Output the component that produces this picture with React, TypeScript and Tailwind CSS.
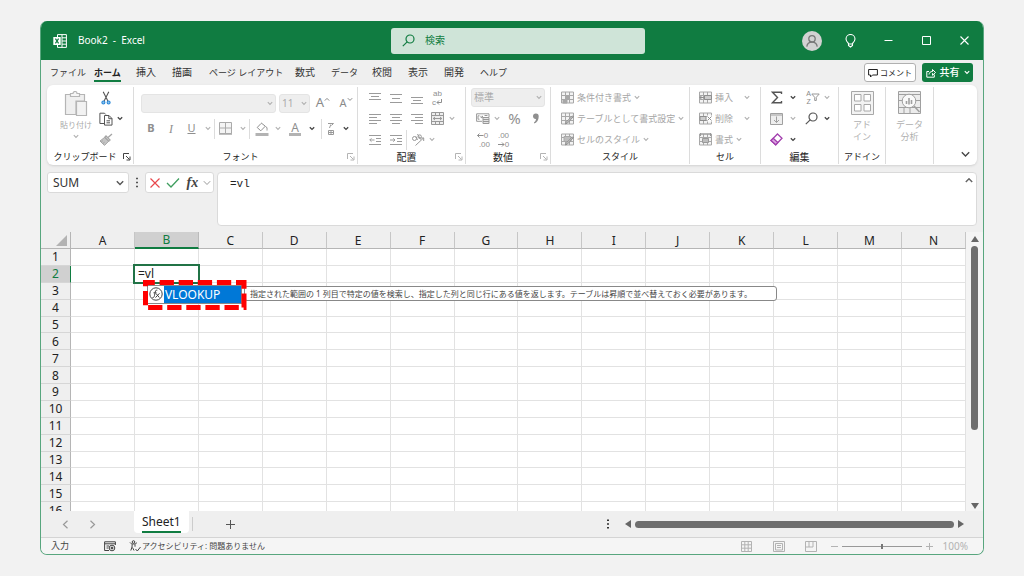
import { useState } from "react";
import type { ReactNode } from "react";

const COLUMNS = ["A", "B", "C", "D", "E", "F", "G", "H", "I", "J", "K", "L", "M", "N"];
const ROWS = Array.from({ length: 16 }, (_, i) => i + 1);

const TABS: { label: string; kana?: boolean }[] = [
  { label: "ファイル", kana: true },
  { label: "ホーム", kana: true },
  { label: "挿入" },
  { label: "描画" },
  { label: "ページ レイアウト", kana: true },
  { label: "数式" },
  { label: "データ", kana: true },
  { label: "校閲" },
  { label: "表示" },
  { label: "開発" },
  { label: "ヘルプ", kana: true },
];

// ── Icons ─────────────────────────────────────────────────────────────────────

function Svg({ w = 14, h = 14, sw = 1, className = "", children }: {
  w?: number;
  h?: number;
  sw?: number;
  className?: string;
  children: ReactNode;
}) {
  return (
    <svg
      width={w}
      height={h}
      viewBox={`0 0 ${w} ${h}`}
      fill="none"
      stroke="currentColor"
      strokeWidth={sw}
      className={`shrink-0 ${className}`}
      aria-hidden="true"
    >
      {children}
    </svg>
  );
}

function Chevron({ dark = false }: { dark?: boolean }) {
  return (
    <Svg w={6} h={5} sw={dark ? 1.3 : 1.1} className={dark ? "text-[#444]" : "text-[#b0b0b0]"}>
      <path d="M.8 1.2 3 3.4 5.2 1.2" />
    </Svg>
  );
}

function Launcher({ dark = false }: { dark?: boolean }) {
  return (
    <Svg w={8} h={8} className={dark ? "text-[#444]" : "text-[#b4b4b4]"}>
      <path d="M.5 6V.5H6M3 3l3.5 3.5M7 3.5V7H3.5" />
    </Svg>
  );
}

function ExcelIcon() {
  return (
    <Svg w={14} h={14} className="text-white">
      <path d="M4.5 3V.6h8.900v12.800H4.500V11M9 .6v12.800M9 3.800h4.400M9 7h4.400M9 10.200h4.400" />
      <path d="M.3 3h7.400v8H.3z" fill="currentColor" stroke="none" />
      <path d="m2.400 4.700 3.200 4.600M5.600 4.700 2.400 9.300" stroke="#107c41" strokeWidth="1.200" />
    </Svg>
  );
}

function PasteIcon() {
  return (
    <Svg w={24} h={26} className="text-[#b5b5b5]" sw={1.2}>
      <path d="M1.500 3.500h19V10H12v13.500H1.500z" fill="#efefef" />
      <path d="M6.500 5.500v-3H9a2 2 0 0 1 4 0h2.500v3z" fill="#f5f5f5" />
      <path d="M12.500 10.500h10v14h-10z" fill="#f2f2f2" />
    </Svg>
  );
}

function ScissorsIcon() {
  return (
    <Svg w={12} h={14} className="text-[#555]" sw={1.1}>
      <path d="m3.200.8 4.800 9.400M8.800.8 4 10.200" />
      <circle cx="3.400" cy="11.500" r="1.500" stroke="#2b88d8" fill="#8ec5ee" />
      <circle cx="8.600" cy="11.500" r="1.500" stroke="#2b88d8" fill="#8ec5ee" />
    </Svg>
  );
}

function CopyIcon() {
  return (
    <Svg w={14} h={14} className="text-[#555]">
      <path d="M5 11.500H.9V1.200h4.600l1.300 1.300" />
      <path d="M5.500 3.500H10l3 3v6.600H5.500zM9.800 3.600v3.100H13M7.500 8.800H11M7.500 10.800H11" />
    </Svg>
  );
}

function BrushIcon() {
  return (
    <Svg w={14} h={13} className="text-[#a5a5a5]">
      <path d="M5.500 4.500 1 8l4.500 4.400 4.200-4.200z" fill="#c4c4c4" />
      <path d="m13 1-4 3.600M7 3l4 4-1.200 1.200-4-4z" fill="#eee" strokeWidth="1.300" />
      <path d="m2.400 8.600 1.400-.8M4 10.400l1.600-1.200" />
    </Svg>
  );
}

function TableIcon({ kind = "grid" }: { kind?: string }) {
  return (
    <Svg w={13} h={13} className="text-[#a8a8a8]">
      <path d="M.5 1h12v11H.5zM.5 4.500h12M.5 8.500h12M4.500 1v11M8.500 1v11" fill="#f3f3f3" />
      {kind === "cond" && <path d="M4.500 1v7.500h3.500v-4H4.500M2 8.500h4V12H2z" fill="#a8a8a8" />}
      {kind === "brush" && <path d="m12.500 4.500-6 6.500-2 1 .8-2 6-6z" fill="#c8c8c8" stroke="#8f8f8f" />}
      {kind === "style" && (
        <>
          <path d="M3 3.500h7v5H3z" fill="#bdbdbd" />
          <path d="m12.500 4.500-6 6.500-2 1 .8-2 6-6z" fill="#c8c8c8" stroke="#8f8f8f" />
        </>
      )}
      {kind === "insert" && <path d="M5.500 4.500h7v4h-7zM4.800 6.500H.8M2.500 4.800.8 6.500l1.700 1.700" fill="#ccc" stroke="#8f8f8f" />}
      {kind === "delete" && (
        <>
          <path d="M8 3.500h5v6H8z" fill="#fff" stroke="none" />
          <path d="M1 4.500h6v4H1zM8.500 4.500l4 4M12.500 4.500l-4 4" fill="#ccc" stroke="#8f8f8f" />
        </>
      )}
      {kind === "format" && <path d="M3.500 5.500h6v4h-6zM1.500 0v3M11.500 0v3M2 1h9" fill="#bdbdbd" stroke="#999" />}
    </Svg>
  );
}

function Lines({ rows }: { rows: [number, number, number][] }) {
  return (
    <Svg w={12} h={12} className="text-[#9b9b9b]">
      {rows.map(([x, y, width]) => (
        <path key={y} d={`M${x} ${y}h${width}`} />
      ))}
    </Svg>
  );
}

function PersonIcon() {
  return (
    <Svg w={20} h={20} className="text-[#777]" sw={1.3}>
      <circle cx="10" cy="10" r="10" fill="#d2d2d2" stroke="none" />
      <circle cx="10" cy="7.800" r="3.200" />
      <path d="M4.800 15.600c.4-3 2.400-4.400 5.200-4.400s4.800 1.400 5.200 4.400" />
    </Svg>
  );
}

function SearchIcon({ className = "" }: { className?: string }) {
  return (
    <Svg w={13} h={13} sw={1.2} className={className}>
      <circle cx="8" cy="5" r="4" />
      <path d="M5.200 7.800.8 12.200" />
    </Svg>
  );
}

function Triangle({ d }: { d: string }) {
  return (
    <Svg w={8} h={8} className="text-[#666]">
      <path d={d} fill="currentColor" stroke="none" />
    </Svg>
  );
}

// ── Ribbon parts ──────────────────────────────────────────────────────────────

function Group({ label, kana, launcher, dark, children }: {
  label?: string;
  kana?: boolean;
  launcher?: boolean;
  dark?: boolean;
  children: ReactNode;
}) {
  return (
    <section aria-label={label} className="flex min-w-0 flex-col border-r border-[#dcdcdc]">
      <div className="h-[63px]">{children}</div>
      <div className="flex h-[14px] items-center text-[#222]">
        <span className={`flex-1 whitespace-nowrap text-center ${kana ? "text-[9px]" : "text-[10px]"}`}>{label}</span>
        {launcher && (
          <button type="button" aria-label={`${label}の設定`} className="mr-[2px]">
            <Launcher dark={dark} />
          </button>
        )}
      </div>
    </section>
  );
}

function Tool({ name, className = "w-[21px]", children }: {
  name: string;
  className?: string;
  children: ReactNode;
}) {
  return (
    <button
      type="button"
      aria-label={name}
      className={`flex h-[21px] shrink-0 items-center justify-center ${className}`}
    >
      {children}
    </button>
  );
}

function Combo({ name, value, className }: { name: string; value: string; className: string }) {
  return (
    <div className={`relative h-[19px] ${className}`}>
      <select
        aria-label={name}
        defaultValue={value}
        className="block h-full w-full appearance-none rounded-[3px] border border-[#e4e4e4] bg-[#eee] py-0 pl-[2px] text-[10px] leading-[17px] text-[#aaa]"
      >
        <option>{value}</option>
      </select>
      <span className="pointer-events-none absolute inset-y-0 right-[3px] flex items-center">
        <Chevron />
      </span>
    </div>
  );
}

function MenuRow({ kind, label, spread = false }: { kind: string; label: string; spread?: boolean }) {
  return (
    <button type="button" className="flex h-[21px] items-center gap-[3px] whitespace-nowrap text-[9px] text-[#a6a6a6]">
      <TableIcon kind={kind} />
      <span>{label}</span>
      <span className={spread ? "ml-2" : ""}>
        <Chevron />
      </span>
    </button>
  );
}

function Rule() {
  return <span className="h-5 w-px shrink-0 bg-[#dcdcdc]" />;
}

function Ribbon() {
  return (
    <div className="mx-[6px] grid h-[80px] shrink-0 grid-cols-[87fr_224fr_108fr_85fr_139fr_71fr_78fr_47fr_48fr_43fr] rounded-[6px] bg-white pt-[2px] pb-px shadow-sm">
      <Group label="クリップボード" kana launcher dark>
        <div className="flex pl-[10px]">
          <button type="button" className="flex w-[38px] flex-col items-center pt-[4px] text-[8px] leading-3 whitespace-nowrap text-[#aaa]">
            <PasteIcon />
            <span className="mt-[2px]">貼り付け</span>
            <span className="mt-[3px]"><Chevron /></span>
          </button>
          <div className="flex flex-col">
            <Tool name="切り取り"><ScissorsIcon /></Tool>
            <div className="flex">
              <Tool name="コピー"><CopyIcon /></Tool>
              <Tool name="コピーのオプション" className="w-2"><Chevron dark /></Tool>
            </div>
            <Tool name="書式のコピー"><BrushIcon /></Tool>
          </div>
        </div>
      </Group>

      <Group label="フォント" kana launcher>
        <div className="flex flex-col gap-[5px] pt-[6px] pl-[7px]">
          <div className="flex h-5 items-center gap-[3px]">
            <Combo name="フォント名" value="" className="w-[135px]" />
            <Combo name="フォント サイズ" value="11" className="w-[31px]" />
            <Tool name="フォント サイズの拡大" className="w-5 text-[13px] text-[#8a8a8a]">
              A
              <Svg w={6} h={5} className="mb-2"><path d="M.8 3.600 3 1.400l2.200 2.200" /></Svg>
            </Tool>
            <Tool name="フォント サイズの縮小" className="w-5 text-[11px] text-[#8a8a8a]">
              A
              <Svg w={6} h={5} className="mb-2"><path d="M.8 1.200 3 3.400l2.200-2.200" /></Svg>
            </Tool>
          </div>
          <div className="flex h-[21px] items-center text-[11px] text-[#8f8f8f]">
            <Tool name="太字" className="w-5"><b>B</b></Tool>
            <Tool name="斜体" className="w-5"><i className="font-['Liberation_Serif',serif] text-[12px]">I</i></Tool>
            <Tool name="下線" className="w-[21px]"><u>U</u></Tool>
            <Tool name="下線の種類" className="w-3"><Chevron /></Tool>
            <Rule />
            <Tool name="罫線">
              <Svg w={13} h={13} className="text-[#aaa]">
                <path d="M.5.5h12v11H.5zM6.500.5v11M.5 6h12" fill="#f4f4f4" />
                <path d="M0 12h13" strokeWidth="1.500" />
              </Svg>
            </Tool>
            <Tool name="罫線の種類" className="w-[13px]"><Chevron /></Tool>
            <Rule />
            <Tool name="塗りつぶし" className="w-[23px]">
              <Svg w={14} h={14} className="text-[#8f8f8f]">
                <path d="m6 1.500-3.800 4 3.600 3.300 4.500-4.600L6 .8M10.500 4.500c2 .5 1.500 2.500 1.500 4" />
                <path d="M.5 12.500h13" stroke="#b3b3b3" strokeWidth="3" />
              </Svg>
            </Tool>
            <Tool name="塗りつぶしの色" className="w-[9px]"><Chevron /></Tool>
            <Tool name="フォントの色" className="w-[26px] text-[12px]">
              <span className="border-b-[3px] border-[#b3b3b3] px-[2px] leading-[11px]">A</span>
            </Tool>
            <Tool name="フォントの色の選択" className="w-[8px]"><Chevron dark /></Tool>
            <span className="w-[5px]" />
            <Rule />
            <Tool name="ふりがな" className="w-[18px]">
              <Svg w={8} h={14} className="text-[#999]">
                <path d="M1 1.500h5.500L4.500 3.500M3.800 2.500 2.500 6M1.500 8.500h5v4h-5zM1.500 10.500h5M4 8.500v4" />
              </Svg>
            </Tool>
            <Tool name="ふりがなの設定" className="w-3"><Chevron dark /></Tool>
          </div>
        </div>
      </Group>

      <Group label="配置" launcher>
        <div className="flex flex-col pl-[6px]">
          <div className="flex">
            <Tool name="上揃え"><Lines rows={[[0, 1.5, 12], [2, 4.5, 8], [0, 7.5, 12]]} /></Tool>
            <Tool name="上下中央揃え"><Lines rows={[[0, 2.5, 12], [2, 6.5, 8], [0, 10.5, 12]]} /></Tool>
            <Tool name="下揃え"><Lines rows={[[0, 5.5, 12], [2, 8.5, 8], [0, 11.5, 12]]} /></Tool>
            <Tool name="折り返して全体を表示" className="w-[21px] flex-col font-['Liberation_Sans',sans-serif] text-[8px] text-[#8f8f8f]">
              <span className="leading-[9px]">ab</span>
              <span className="flex items-center leading-[9px]">
                c
                <Svg w={7} h={7}><path d="M5.500 0v3.500H1M3 1.500l-2 2 2 2" /></Svg>
              </span>
            </Tool>
          </div>
          <div className="flex">
            <Tool name="左揃え"><Lines rows={[[0, 1.5, 12], [0, 4.5, 8], [0, 7.5, 12], [0, 10.5, 8]]} /></Tool>
            <Tool name="中央揃え"><Lines rows={[[0, 1.5, 12], [2, 4.5, 8], [0, 7.5, 12], [2, 10.5, 8]]} /></Tool>
            <Tool name="右揃え"><Lines rows={[[0, 1.5, 12], [4, 4.5, 8], [0, 7.5, 12], [4, 10.5, 8]]} /></Tool>
            <Tool name="セルを結合して中央揃え">
              <Svg w={13} h={13} className="text-[#999]">
                <path d="M.5.5h12v12H.5zM.5 3.500h12M.5 9.500h12M4.500.5v3M8.500.5v3M4.500 9.500v3M8.500 9.500v3" fill="#eee" />
                <path d="M2 6.500h9M4 5 2.200 6.500 4 8M9 5l1.800 1.500L9 8" />
              </Svg>
            </Tool>
            <Tool name="結合の種類" className="w-2"><Chevron /></Tool>
          </div>
          <div className="flex items-center">
            <Tool name="インデントを減らす">
              <Svg w={12} h={12} className="text-[#9b9b9b]">
                <path d="M0 1.500h12M7 4.500h5M7 7.500h5M0 10.500h12M5.500 6H.8M2.500 4.300.8 6l1.700 1.700" />
              </Svg>
            </Tool>
            <Tool name="インデントを増やす">
              <Svg w={12} h={12} className="text-[#9b9b9b]">
                <path d="M0 1.500h12M7 4.500h5M7 7.500h5M0 10.500h12M0 6h5M3.300 4.300 5 6 3.300 7.700" />
              </Svg>
            </Tool>
            <Rule />
            <Tool name="方向">
              <Svg w={14} h={14} className="text-[#999]">
                <circle cx="3.500" cy="5.500" r="2" />
                <path d="m5 3.500 1.500 3.500M6.500 1l3 5.500" />
                <circle cx="8.700" cy="3.600" r="1.700" />
                <path d="m4.500 12.500 8-7.500M9.500 5h3.200v3" />
              </Svg>
            </Tool>
            <Tool name="方向の種類" className="w-2"><Chevron /></Tool>
          </div>
        </div>
      </Group>

      <Group label="数値" launcher>
        <div className="flex flex-col">
          <div className="flex h-[21px] items-center px-[5px]">
            <Combo name="表示形式" value="標準" className="flex-1" />
          </div>
          <div className="flex items-center pl-[6px] text-[#8f8f8f]">
            <Tool name="通貨表示形式">
              <Svg w={14} h={11} className="text-[#999]">
                <path d="M13 4V.8H.6v7.500H6M3.500 2.800H2v3.400h1.500M5 2.800v1.800h1.500V2.800M8.500 2.500h3" />
                <path d="M7 4.500h6v6H7zM7 6.500h6M7 8.500h6" fill="#e5e5e5" />
              </Svg>
            </Tool>
            <Tool name="通貨の選択" className="w-2"><Chevron /></Tool>
            <Tool name="パーセント スタイル" className="ml-[3px] w-[21px] text-[15px]">%</Tool>
            <Tool name="桁区切りスタイル">
              <Svg w={8} h={12}>
                <path d="M1 3.300a2.800 2.800 0 0 1 5.700.2c0 3.500-1.800 6-4.200 7l-.6-.9c1.300-.8 2-2 2.100-3.500C2.300 6.300 1 5 1 3.300z" fill="currentColor" stroke="none" />
              </Svg>
            </Tool>
          </div>
          <div className="flex pl-[6px] font-['Liberation_Sans',sans-serif] text-[8px] text-[#8f8f8f]">
            <Tool name="小数点以下の表示桁数を増やす" className="w-[21px] flex-col">
              <span className="flex items-center leading-[9px]">
                <Svg w={7} h={5}><path d="M6.500 2.500h-6M2.500.5l-2 2 2 2" /></Svg>0
              </span>
              <span className="self-end pr-[3px] leading-[9px]">.00</span>
            </Tool>
            <Tool name="小数点以下の表示桁数を減らす" className="w-[21px] flex-col">
              <span className="leading-[9px]">.00</span>
              <span className="flex items-center leading-[9px]">
                <Svg w={7} h={5}><path d="M0 2.500h6M4 .5l2 2-2 2" /></Svg>0
              </span>
            </Tool>
          </div>
        </div>
      </Group>

      <Group label="スタイル" kana>
        <div className="flex flex-col pl-[10px]">
          <MenuRow kind="cond" label="条件付き書式" />
          <MenuRow kind="brush" label="テーブルとして書式設定" />
          <MenuRow kind="style" label="セルのスタイル" />
        </div>
      </Group>

      <Group label="セル" kana>
        <div className="flex flex-col pl-[9px]">
          <MenuRow kind="insert" label="挿入" spread />
          <MenuRow kind="delete" label="削除" spread />
          <MenuRow kind="format" label="書式" />
        </div>
      </Group>

      <Group label="編集">
        <div className="grid grid-cols-[21px_12px_24px_8px] pl-[5px]">
          <Tool name="合計">
            <Svg w={12} h={13} sw={1.4} className="text-[#555]">
              <path d="M10.500 3V1.200H1.500L6.500 6.500l-5 5.200h9V10" />
            </Svg>
          </Tool>
          <Tool name="合計の種類" className="w-3"><Chevron dark /></Tool>
          <Tool name="並べ替えとフィルター" className="w-6 justify-end pr-[3px]">
            <span className="flex flex-col font-['Liberation_Sans',sans-serif] text-[7px] leading-[8px] text-[#888]">
              <span>A</span>
              <span>Z</span>
            </span>
            <Svg w={9} h={9} className="text-[#999]">
              <path d="M.8 1h7.400L5.300 4.300V7.500H3.700V4.300z" />
            </Svg>
          </Tool>
          <Tool name="並べ替えの種類" className="w-2"><Chevron /></Tool>

          <Tool name="フィル">
            <Svg w={13} h={12} className="text-[#a0a0a0]">
              <path d="M.5.5h12v11H.5zM.5 2h12" fill="#eee" />
              <path d="M6.500 3.500v6M4 7l2.500 2.500L9 7" />
            </Svg>
          </Tool>
          <Tool name="フィルの種類" className="w-3"><Chevron /></Tool>
          <Tool name="検索と選択" className="w-6"><SearchIcon className="text-[#555]" /></Tool>
          <Tool name="検索の種類" className="w-2"><Chevron dark /></Tool>

          <Tool name="クリア">
            <Svg w={13} h={13} sw={1.3} className="text-[#a33fae]">
              <path d="M7.500 1 12 5.200 5.700 11.800 1 7.500z" fill="#fff" />
              <path d="m3.200 5.300 4.600 4.300-2.100 2.200L1 7.500z" fill="#dba4e2" />
            </Svg>
          </Tool>
          <Tool name="クリアの種類" className="w-3"><Chevron dark /></Tool>
        </div>
      </Group>

      <Group label="アドイン" kana>
        <button type="button" className="flex w-full flex-col items-center pt-[4px] text-[9px] leading-3 text-[#b0b0b0]">
          <Svg w={23} h={24} className="mb-[4px] text-[#a8a8a8]">
            <path d="M.5.5h22v23H.5z" fill="#f3f3f3" />
            <path d="M3.500 3.500H10V10H3.500zM13 3.500h6.500V10H13zM3.500 13.500H10V20H3.500zM13 13.500h6.500V20H13z" fill="#fff" />
          </Svg>
          <span>アド</span>
          <span>イン</span>
        </button>
      </Group>

      <Group>
        <button type="button" className="flex w-full flex-col items-center pt-[4px] text-[9px] leading-3 text-[#b0b0b0]">
          <Svg w={23} h={24} className="mb-[4px] text-[#a0a0a0]">
            <path d="M.5.5h22v22H.5zM.5 3.500h22M.5 9.500h22M.5 16.500h22M6 16.500v6M12 16.500v6" fill="#ececec" />
            <circle cx="11" cy="10" r="6.800" fill="#fafafa" />
            <path d="M8.500 13v-3M11 13.500V7M13.500 13V9" strokeWidth="1.600" />
            <path d="m16 15 5.500 6" strokeWidth="1.600" />
          </Svg>
          <span>データ</span>
          <span>分析</span>
        </button>
      </Group>

      <div className="flex items-end justify-end pr-[7px] pb-[6px]">
        <button type="button" aria-label="リボンを折りたたむ">
          <Svg w={9} h={8} sw={1.3} className="text-[#444]"><path d="M.8 2.200 4.500 6l3.700-3.800" /></Svg>
        </button>
      </div>
    </div>
  );
}

// ── Title bar and tabs ────────────────────────────────────────────────────────

function TitleBar() {
  return (
    <header className="grid h-[39px] shrink-0 grid-cols-[350fr_254fr_338fr] items-center bg-[#107c41] text-white">
      <div className="flex items-center gap-[11px] pl-[12px] text-[10px]">
        <ExcelIcon />
        <h1 className="whitespace-pre">Book2  -  Excel</h1>
      </div>
      <label className="flex h-[26px] items-center gap-[10px] rounded-[3px] bg-[#cfe4d8] pl-[11px] text-[#107c41]">
        <SearchIcon />
        <input
          type="search"
          aria-label="検索"
          placeholder="検索"
          className="min-w-0 flex-1 bg-transparent text-[10px] outline-none placeholder:text-[#107c41]"
        />
      </label>
      <div className="flex items-center justify-end">
        <Tool name="アカウント" className="w-[38px]"><PersonIcon /></Tool>
        <Tool name="ヒント" className="w-[38px]">
          <Svg w={11} h={14} sw={1.1}>
            <path d="M3.500 9.500C2 8 1 6.800 1 5a4.500 4.500 0 0 1 9 0c0 1.800-1 3-2.500 4.500v2L5.500 13l-2-1.500zM3.500 10h4" />
          </Svg>
        </Tool>
        <Tool name="最小化" className="w-[38px]"><Svg w={9} h={9}><path d="M.5 4.500h8" /></Svg></Tool>
        <Tool name="最大化" className="w-[38px]"><Svg w={9} h={9}><path d="M.5.5h8v8h-8z" /></Svg></Tool>
        <Tool name="閉じる" className="w-[38px]"><Svg w={9} h={9} sw={1.1}><path d="m.5.5 8 8M8.500.5l-8 8" /></Svg></Tool>
      </div>
    </header>
  );
}

function TabBar() {
  const [active, setActive] = useState("ホーム");
  return (
    <div className="flex h-[25px] shrink-0 items-center pr-[10px] pl-[9px]">
      <nav className="grid flex-1 grid-cols-[44px_42px_36px_37px_86px_36px_41px_36px_36px_36px_auto] text-[#333]">
        {TABS.map(({ label, kana }) => (
          <button
            key={label}
            type="button"
            onClick={() => setActive(label)}
            className={[
              "h-[19px] justify-self-start whitespace-nowrap border-b-2 pt-[2px]",
              kana ? "text-[9px]" : "text-[10px]",
              active === label ? "border-[#107c41] font-bold text-[#222]" : "border-transparent",
            ].join(" ")}
          >
            {label}
          </button>
        ))}
      </nav>
      <div className="flex gap-[6px] whitespace-nowrap text-[9px]">
        <button type="button" className="flex h-[19px] w-[52px] items-center justify-center gap-[2px] rounded-[3px] border border-[#b0b0b0] bg-white text-[8px] text-[#222]">
          <Svg w={10} h={10}><path d="M.6 1.500h8.800v5.500H4.500L2.500 9V7H.6z" /></Svg>
          コメント
        </button>
        <button type="button" className="flex h-[19px] w-[51px] items-center justify-center gap-[4px] rounded-[3px] bg-[#107c41] text-[10px] font-medium text-white">
          <Svg w={10} h={10}>
            <path d="M3 3.500H.8v5.700h7.500V6.500M3 6.500c.2-2 1.500-3 3.500-3V1.500l3 3-3 2.800V5.200" />
          </Svg>
          共有
          <Svg w={6} h={5} sw={1.2}><path d="M.8 1.200 3 3.400 5.200 1.200" /></Svg>
        </button>
      </div>
    </div>
  );
}

// ── Formula bar ───────────────────────────────────────────────────────────────

function FormulaBar({ formula, onChange }: { formula: string; onChange: (v: string) => void }) {
  return (
    <div className="mx-[6px] mt-[7px] flex h-[54px] shrink-0 items-start">
      <div className="flex h-[21px] w-[82px] items-center rounded-[3px] border border-[#dadada] bg-white pr-[4px] pl-[5px]">
        <input aria-label="名前ボックス" defaultValue="SUM" className="min-w-0 flex-1 text-[12px] text-[#333] outline-none" />
        <button type="button" aria-label="名前の一覧">
          <Svg w={8} h={6} sw={1.4} className="text-[#555]"><path d="m.8 1.200 3.200 3.300 3.200-3.300" /></Svg>
        </button>
      </div>
      <Svg w={16} h={21} className="text-[#555]">
        <path d="M7 6.500h2M7 10.500h2M7 14.500h2" strokeWidth="1.500" />
      </Svg>
      <div className="flex h-[21px] w-[69px] items-center justify-between rounded-[3px] border border-[#dadada] bg-white pr-[2px] pl-[3px]">
        <button type="button" aria-label="キャンセル" className="text-[#e8474c]">
          <Svg w={12} h={12} sw={1.2}><path d="m1.500 1.500 9 9M10.500 1.500l-9 9" /></Svg>
        </button>
        <button type="button" aria-label="入力" className="text-[#3f9e5f]">
          <Svg w={14} h={12} sw={1.3}><path d="m1 6 4 4L13 1.500" /></Svg>
        </button>
        <button type="button" aria-label="関数の挿入" className="pl-[2px] font-['Liberation_Serif',serif] text-[14px] leading-4 font-bold text-[#444] italic">
          fx
        </button>
        <button type="button" aria-label="関数の履歴">
          <Svg w={8} h={6} className="text-[#999]"><path d="m.8 1.200 3.200 3.300 3.200-3.300" /></Svg>
        </button>
      </div>
      <div className="ml-[3px] flex h-full flex-1 items-start rounded-[4px] border border-[#dadada] bg-white pt-[3px] pr-[3px] pl-[12px]">
        <textarea
          aria-label="数式バー"
          value={formula}
          onChange={(e) => onChange(e.target.value)}
          className="h-full flex-1 resize-none font-['Liberation_Mono',monospace] text-[11px] leading-4 text-[#222] outline-none"
        />
        <button type="button" aria-label="数式バーを折りたたむ" className="pt-[1px]">
          <Svg w={8} h={7} sw={1.5} className="text-[#666]"><path d="m.8 5 3.200-3.200L7.200 5" /></Svg>
        </button>
      </div>
    </div>
  );
}

// ── Sheet ─────────────────────────────────────────────────────────────────────

function Suggestion() {
  return (
    <>
      <div className="absolute top-[19px] left-[12px] z-20 flex h-[19px] w-[95px] items-stretch border border-[#888] bg-white">
        <span className="flex w-[16px] items-center justify-center">
          <Svg w={14} h={14} className="text-[#444]">
            <circle cx="7" cy="7" r="6.200" />
            <path d="M8.300 3.200C6.500 2.500 6.300 4.500 5.800 7s-.8 4-2.300 3.500M4.500 5.800h3M7 6.500l3.300 4M10.500 6.300l-4 4.300" />
          </Svg>
        </span>
        <button type="button" className="flex-1 bg-[#0078d7] pl-px text-left text-[12px] leading-[17px] text-white">
          VLOOKUP
        </button>
      </div>
      <svg className="absolute top-[14px] left-[8px] z-30" width="104" height="30" fill="none" aria-hidden="true">
        <rect x="2.500" y="2.500" width="98.500" height="25" stroke="#f00" strokeWidth="5" strokeDasharray="14.300 4.800" strokeDashoffset="5" />
      </svg>
      <div role="tooltip" className="absolute top-[20px] left-[109px] z-10 flex h-[15px] w-[533px] items-center rounded-[3px] border border-[#888] bg-white pl-[5px] text-[8px] text-[#444]">
        指定された範囲の 1 列目で特定の値を検索し、指定した列と同じ行にある値を返します。テーブルは昇順で並べ替えておく必要があります。
      </div>
    </>
  );
}

function Sheet({ formula, onChange }: { formula: string; onChange: (v: string) => void }) {
  return (
    <div className="mt-[6px] flex min-h-0 flex-1">
      <div className="min-w-0 flex-1 overflow-hidden">
        <table className="h-[287px] w-full table-fixed border-separate border-spacing-0 text-[12px] leading-[15px] text-[#222]">
          <thead>
            <tr className="h-[17px]">
              <th className="w-[30px] border-r border-b border-[#b5b5b5] p-0">
                <Svg w={28} h={14}><path d="M26 2v11H15z" fill="#b3b3b3" stroke="none" /></Svg>
              </th>
              {COLUMNS.map((col) => (
                <th
                  key={col}
                  scope="col"
                  className={[
                    "border-r p-0 font-normal",
                    col === "B" ? "border-b-2 border-r-[#bbb] border-b-[#107c41] bg-[#d0d0d0] text-[#107c41]" : "border-b border-r-[#c6c6c6] border-b-[#b5b5b5]",
                  ].join(" ")}
                >
                  {col}
                </th>
              ))}
            </tr>
          </thead>
          <tbody>
            {ROWS.map((row) => (
              <tr key={row}>
                <th
                  scope="row"
                  className={[
                    "border-r border-b border-b-[#d6d6d6] p-0 font-normal",
                    row === 2 ? "border-r-[#107c41] bg-[#d0d0d0] text-[#107c41]" : "border-r-[#b5b5b5]",
                  ].join(" ")}
                >
                  {row}
                </th>
                {COLUMNS.map((col) => (
                  <td key={col} className="relative border-r border-b border-[#e2e2e2] bg-white p-0">
                    {col === "B" && row === 2 && (
                      <>
                        <div className="absolute -inset-[2px] z-10 flex items-center border-2 border-[#217346] bg-white pl-[3px]">
                          <input
                            aria-label="B2"
                            value={formula}
                            onChange={(e) => onChange(e.target.value)}
                            className="h-[15px] w-full outline-none"
                          />
                        </div>
                        <Suggestion />
                      </>
                    )}
                  </td>
                ))}
              </tr>
            ))}
          </tbody>
        </table>
      </div>
      <div className="flex w-[17px] flex-col items-center bg-[#f4f4f4] pt-[3px] pb-px">
        <Triangle d="M4 1 8 7H0z" />
        <span className="mt-[3px] w-[7px] flex-[185] rounded-full bg-[#6e6e6e]" />
        <span className="flex-[72]" />
        <Triangle d="M4 7 0 1h8z" />
      </div>
    </div>
  );
}

function SheetTabs() {
  return (
    <div className="flex h-[26px] shrink-0 items-center">
      <div className="flex w-[93px] items-center gap-5 pl-[21px] text-[#999]">
        <button type="button" aria-label="前のシート"><Svg w={7} h={9} sw={1.2}><path d="M5.500.8 1.500 4.500l4 3.700" /></Svg></button>
        <button type="button" aria-label="次のシート"><Svg w={7} h={9} sw={1.2}><path d="m1.500.8 4 3.700-4 3.700" /></Svg></button>
      </div>
      <button type="button" className="h-[22px] self-start rounded-b-[4px] bg-white px-[8px] text-[12px] text-[#222]">
        <span className="block border-b-2 border-[#107c41] leading-[19px]">Sheet1</span>
      </button>
      <span className="ml-[3px] h-[14px] w-px bg-[#ccc]" />
      <button type="button" aria-label="新しいシート" className="ml-[33px] text-[#555]">
        <Svg w={9} h={9}><path d="M4.500 0v9M0 4.500h9" /></Svg>
      </button>
      <div className="ml-auto flex w-[377px] items-center gap-[3px] pr-[18px]">
        <Svg w={4} h={10} className="text-[#333]" sw={1.5}><path d="M1 1.200h2M1 5h2M1 8.800h2" /></Svg>
        <span className="w-[8px]" />
        <Triangle d="M1 4 7 0v8z" />
        <span className="h-[7px] flex-1 rounded-full bg-[#6e6e6e]" />
        <Triangle d="M7 4 1 0v8z" />
      </div>
    </div>
  );
}

function StatusBar() {
  return (
    <footer className="flex h-[17px] shrink-0 items-center border-t border-[#d4d4d4] bg-[#f5f5f5] pr-[15px] pl-[10px] text-[9px] whitespace-nowrap text-[#444]">
      <span className="w-[53px]">入力</span>
      <button type="button" aria-label="マクロの記録">
        <Svg w={12} h={11}>
          <path d="M5 9.500H.6V.8h10.800V4M.6 2.800h10.800M2.500 5h2.500M2.500 7h2" />
          <circle cx="8" cy="7" r="2.800" />
          <circle cx="8" cy="7" r="1" fill="currentColor" />
        </Svg>
      </button>
      <button type="button" className="ml-[13px] flex items-center gap-px text-[8px]">
        <Svg w={12} h={12}>
          <circle cx="4.500" cy="2" r="1.300" />
          <path d="M1 2.500c1 1.300 2 1.500 3.500 1.500S7.200 3.500 8 2.500M3.200 4.200 3 7l-1.200 3.500M6 4.200v2.500M3.500 7.500 5 10.500M6.500 9l1.800 2 3.200-4" />
        </Svg>
        アクセシビリティ: 問題ありません
      </button>
      <div className="ml-auto flex items-center text-[#b3b3b3]">
        <button type="button" aria-label="標準"><Svg w={11} h={11}><path d="M.5.5h10v10H.5zM.5 3.800h10M.5 7.200h10M3.800.5v10M7.200.5v10" /></Svg></button>
        <button type="button" aria-label="ページ レイアウト" className="ml-[21px]">
          <Svg w={12} h={11}><path d="M.5.5h11v10H.5zM2.500 2.500h7v6.500h-7zM4 4.500h4M4 6.500h4" /></Svg>
        </button>
        <button type="button" aria-label="改ページ プレビュー" className="ml-[20px]">
          <Svg w={12} h={11}><path d="M.5.5h11v10H.5zM4 .5v5.500h4V.5M.5 6H4" /></Svg>
        </button>
        <button type="button" aria-label="縮小" className="ml-[14px]"><Svg w={7} h={7}><path d="M0 3.500h7" /></Svg></button>
        <input
          type="range"
          aria-label="ズーム"
          min={0}
          max={200}
          defaultValue={100}
          className="mx-[4px] h-[6px] w-[80px] appearance-none bg-transparent [&::-webkit-slider-runnable-track]:h-px [&::-webkit-slider-runnable-track]:bg-[#999] [&::-webkit-slider-thumb]:-mt-[2px] [&::-webkit-slider-thumb]:h-[5px] [&::-webkit-slider-thumb]:w-[2px] [&::-webkit-slider-thumb]:appearance-none [&::-webkit-slider-thumb]:bg-[#777]"
        />
        <button type="button" aria-label="拡大"><Svg w={7} h={7}><path d="M0 3.500h7M3.500 0v7" /></Svg></button>
        <span className="ml-[10px] text-[10px]">100%</span>
      </div>
    </footer>
  );
}

export default function App() {
  const [formula, setFormula] = useState("=vl");
  return (
    <div className="flex h-screen flex-col bg-[#f2f2f2] px-10 py-[21px] font-['Noto_Sans','Noto_Sans_CJK_JP',sans-serif]">
      <main className="flex min-h-0 flex-1 flex-col overflow-hidden rounded-[7px] border-x border-b border-[#58a67e] bg-[#efefef]">
        <TitleBar />
        <TabBar />
        <Ribbon />
        <FormulaBar formula={formula} onChange={setFormula} />
        <Sheet formula={formula} onChange={setFormula} />
        <SheetTabs />
        <StatusBar />
      </main>
    </div>
  );
}
